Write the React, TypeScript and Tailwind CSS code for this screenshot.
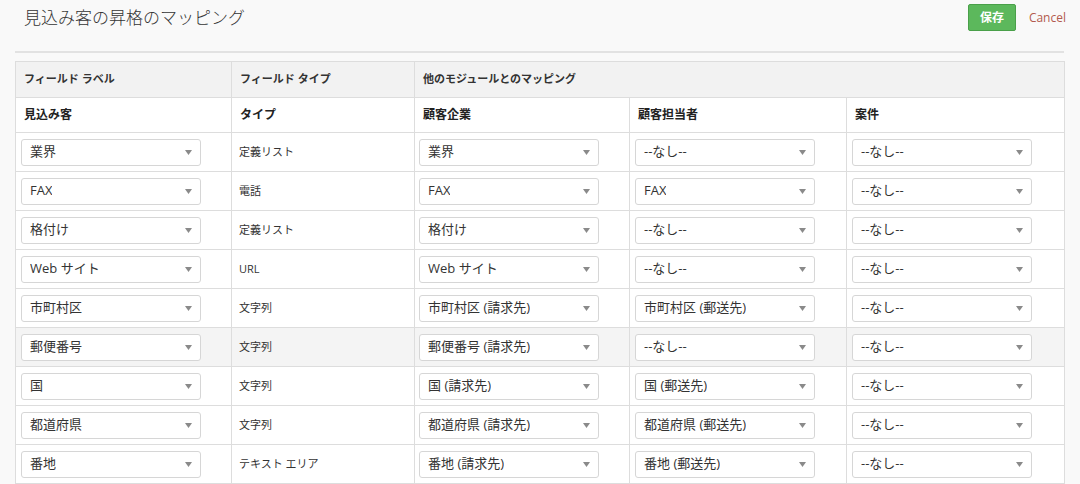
import React from "react";

type Row = {
  lead: string;
  type: string;
  account: string;
  contact: string;
  deal: string;
  active?: boolean;
};

const NONE = "--なし--";

const rows: Row[] = [
  { lead: "業界", type: "定義リスト", account: "業界", contact: NONE, deal: NONE },
  { lead: "FAX", type: "電話", account: "FAX", contact: "FAX", deal: NONE },
  { lead: "格付け", type: "定義リスト", account: "格付け", contact: NONE, deal: NONE },
  { lead: "Web サイト", type: "URL", account: "Web サイト", contact: NONE, deal: NONE },
  { lead: "市町村区", type: "文字列", account: "市町村区 (請求先)", contact: "市町村区 (郵送先)", deal: NONE },
  { lead: "郵便番号", type: "文字列", account: "郵便番号 (請求先)", contact: NONE, deal: NONE, active: true },
  { lead: "国", type: "文字列", account: "国 (請求先)", contact: "国 (郵送先)", deal: NONE },
  { lead: "都道府県", type: "文字列", account: "都道府県 (請求先)", contact: "都道府県 (郵送先)", deal: NONE },
  { lead: "番地", type: "テキスト エリア", account: "番地 (請求先)", contact: "番地 (郵送先)", deal: NONE },
];

function FakeSelect({ value }: { value: string }) {
  return (
    <div className="flex h-[27px] w-[180px] items-center justify-between rounded-[3px] border border-[#d6d6d6] bg-white pl-[8px] pr-[8px] text-[13px] text-[#333]">
      <span className="truncate">{value}</span>
      <svg width="7" height="5" viewBox="0 0 7 5" className="shrink-0">
        <path d="M0 0 L7 0 L3.5 5 Z" fill="#8a8a8a" />
      </svg>
    </div>
  );
}

export default function App() {
  const cell = "border border-[#dddddd] align-middle";
  return (
    <div
      className="min-h-[484px] w-[1080px] bg-[#f9f9f9] pl-[15px] pr-[16px] text-[#333]"
      style={{ fontFamily: '"Open Sans", "Noto Sans CJK JP", sans-serif' }}
    >
      <div className="flex h-[51px] items-start justify-between">
        <h1 className="pl-[9px] pt-[6px] text-[17px] font-light leading-[24px] text-[#333]">
          見込み客の昇格のマッピング
        </h1>
        <div className="mr-[-16px] flex items-center pt-[4px]">
          <button className="h-[27px] w-[48px] rounded-[2px] border border-[#4aa04a] bg-[#5cb85c] text-[12px] font-bold text-white">
            保存
          </button>
          <span className="ml-[13px] mr-[14px] text-[12px] text-[#b35a4e]">Cancel</span>
        </div>
      </div>
      <div className="h-[2px] bg-[#e2e2e2]" />
      <table className="mt-[8px] w-[1049px] table-fixed border-collapse bg-white">
        <colgroup>
          <col className="w-[216px]" />
          <col className="w-[183px]" />
          <col className="w-[215px]" />
          <col className="w-[217px]" />
          <col className="w-[218px]" />
        </colgroup>
        <thead>
          <tr className="h-[36px] bg-[#f2f2f2] text-left text-[11px] font-bold text-[#333]">
            <th className={`${cell} pl-[8px]`}>フィールド ラベル</th>
            <th className={`${cell} pl-[8px]`}>フィールド タイプ</th>
            <th colSpan={3} className={`${cell} pl-[8px]`}>
              他のモジュールとのマッピング
            </th>
          </tr>
          <tr className="h-[35px] bg-white text-left text-[12px] font-bold text-[#222]">
            <th className={`${cell} pl-[8px]`}>見込み客</th>
            <th className={`${cell} pl-[8px]`}>タイプ</th>
            <th className={`${cell} pl-[8px]`}>顧客企業</th>
            <th className={`${cell} pl-[8px]`}>顧客担当者</th>
            <th className={`${cell} pl-[8px]`}>案件</th>
          </tr>
        </thead>
        <tbody>
          {rows.map((r) => (
            <tr key={r.lead} className={`h-[39px] ${r.active ? "bg-[#f4f4f4]" : "bg-white"}`}>
              <td className={`${cell} pl-[5px]`}>
                <FakeSelect value={r.lead} />
              </td>
              <td className={`${cell} pl-[7px] text-[11px] text-[#333]`}>{r.type}</td>
              <td className={`${cell} pl-[4px]`}>
                <FakeSelect value={r.account} />
              </td>
              <td className={`${cell} pl-[5px]`}>
                <FakeSelect value={r.contact} />
              </td>
              <td className={`${cell} pl-[5px]`}>
                <FakeSelect value={r.deal} />
              </td>
            </tr>
          ))}
        </tbody>
      </table>
    </div>
  );
}
